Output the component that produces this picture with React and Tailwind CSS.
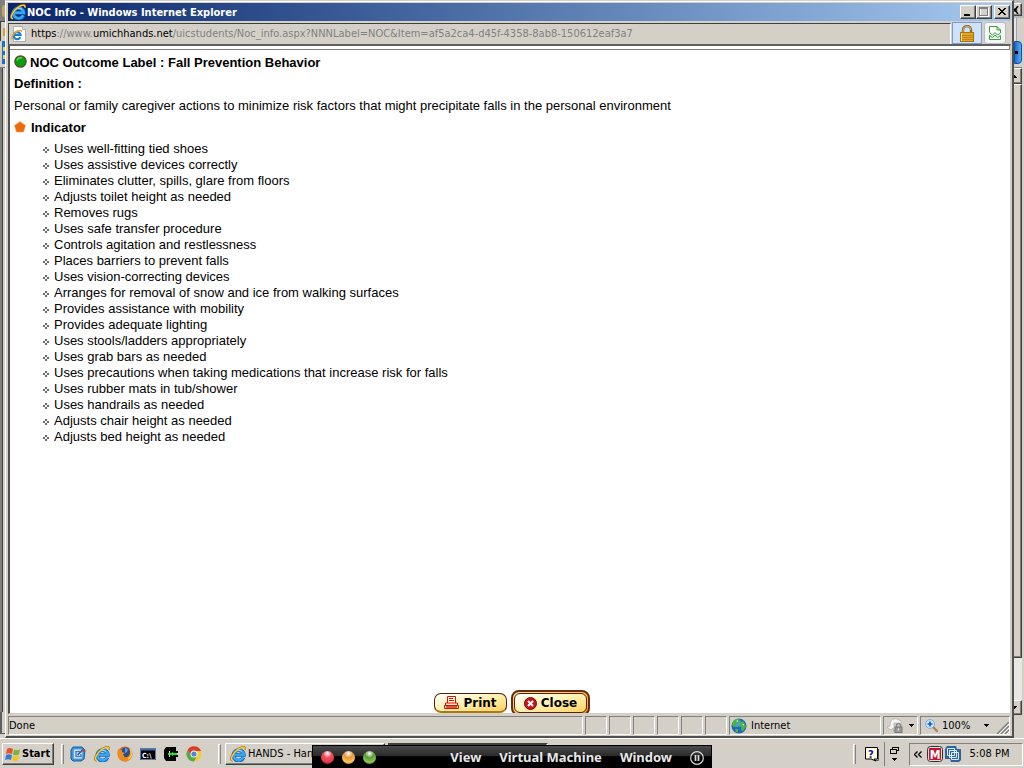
import React from 'react'

const indicators = [
  'Uses well-fitting tied shoes',
  'Uses assistive devices correctly',
  'Eliminates clutter, spills, glare from floors',
  'Adjusts toilet height as needed',
  'Removes rugs',
  'Uses safe transfer procedure',
  'Controls agitation and restlessness',
  'Places barriers to prevent falls',
  'Uses vision-correcting devices',
  'Arranges for removal of snow and ice from walking surfaces',
  'Provides assistance with mobility',
  'Provides adequate lighting',
  'Uses stools/ladders appropriately',
  'Uses grab bars as needed',
  'Uses precautions when taking medications that increase risk for falls',
  'Uses rubber mats in tub/shower',
  'Uses handrails as needed',
  'Adjusts chair height as needed',
  'Adjusts bed height as needed',
]

const raised =
  'border border-t-white border-l-white border-r-[#404040] border-b-[#404040] shadow-[inset_-1px_-1px_0_#808080]'
const sunken = 'border border-t-[#808080] border-l-[#808080] border-r-white border-b-white'

function IeIcon({ className }) {
  return (
    <svg viewBox="0 0 16 16" className={className} aria-hidden="true">
      <path d="M13.4 11.4A5.2 5.2 0 1 1 13.8 8.800H4.500" fill="none" stroke="#0f62bd" strokeWidth="3.800" />
      <path d="M13.2 11.2A5.1 5.1 0 1 1 13.600 8.700H4.500" fill="none" stroke="#36a8f0" strokeWidth="2.600" />
      <path d="M4.500 6.500A5 5 0 0 1 12 5.500" fill="none" stroke="#a6e0ff" strokeWidth="1" />
      <path
        d="M2.800 14.800C-1.200 14.500 2 7 8 3 12 .3 16.200 .2 15 3.800"
        fill="none"
        stroke="#b87a10"
        strokeWidth="2"
      />
      <path d="M3 14.600C-.6 14 2.400 7.200 8.200 3.200 12 .6 15.600 .6 14.800 3.500" fill="none" stroke="#ffcf40" strokeWidth="1.100" />
    </svg>
  )
}

function PageIcon() {
  return (
    <svg viewBox="0 0 16 16" className="w-4 h-4" aria-hidden="true">
      <path d="M2.500 .5h9l3 3v12h-12z" fill="#fff" stroke="#b0b0b0" />
      <path d="M11.500 .5v3h3" fill="#e4e4e4" stroke="#b0b0b0" />
      <path d="M9.300 11.200A3.500 3.500 0 1 1 9.600 9H3.500" fill="none" stroke="#1c7fda" strokeWidth="2.200" />
      <path d="M1.500 13.400C-.5 12 2.500 7 6.500 5c2.500-1 4.500-.8 3.800 1" fill="none" stroke="#e9a01a" strokeWidth="1.400" />
    </svg>
  )
}

function CaptionButton({ label, className, children }) {
  return (
    <button type="button" aria-label={label} className={`w-4 h-[14px] bg-[#d4d0c8] ${raised} ${className}`}>
      <svg viewBox="0 0 14 12" className="w-[14px] h-3" shapeRendering="crispEdges" aria-hidden="true">
        {children}
      </svg>
    </button>
  )
}

function TitleBar() {
  return (
    <div className="h-[18px] flex items-center pl-[2px] pr-px bg-linear-to-r from-[#0a246a] to-[#a6caf0]">
      <IeIcon className="w-4 h-4 shrink-0" />
      <h1 className="flex-1 pl-px pt-[2px] text-[11px] font-bold text-white whitespace-nowrap">
        NOC Info - Windows Internet Explorer
      </h1>
      <CaptionButton label="Minimize" className="">
        <path d="M3 8h6v2H3z" />
      </CaptionButton>
      <CaptionButton label="Maximize" className="">
        <path d="M3.500 2.500h8v8h-8z" fill="none" stroke="#fff" />
        <path d="M2.500 1.500h8v8h-8zM2 2.500h9" fill="none" stroke="#808080" />
      </CaptionButton>
      <CaptionButton label="Close window" className="ml-[2px]">
        <path d="M3 2h2v1h1v1h2V3h1V2h2v1h-1v1H9v1H8v1h1v1h1v1h1v1H9V8H8V7H6v1H5v1H3V8h1V7h1V6h1V5H5V4H4V3H3z" />
      </CaptionButton>
    </div>
  )
}

function AddressBar() {
  return (
    <div className="h-[23px] flex gap-px">
      <div className="flex-1 min-w-0 flex items-center mt-[2px] pl-[2px] border-t border-l border-t-[#404040] border-l-[#404040] border-r border-r-white">
        <PageIcon />
        <a href="#" className="pl-1 text-[11px] text-[#808080] whitespace-nowrap overflow-hidden">
          <span className="text-black">https</span>://www.<span className="text-black">umichhands.net</span>
          /uicstudents/Noc_info.aspx?NNNLabel=NOC&amp;Item=af5a2ca4-d45f-4358-8ab8-150612eaf3a7
        </a>
      </div>
      <button
        type="button"
        aria-label="Security report"
        className="w-[30px] mt-px mr-px flex items-center justify-center border border-[#7a9cc6] bg-[#cfe1fb]"
      >
        <svg viewBox="0 0 14 17" className="w-[14px] h-[17px]" aria-hidden="true">
          <path d="M3 8V5a4 4 0 0 1 8 0v3" fill="none" stroke="#8a6d28" strokeWidth="2.400" />
          <path d="M3.200 8V5a3.800 3.800 0 0 1 7.600 0" fill="none" stroke="#d9c48a" strokeWidth=".8" />
          <rect x=".5" y="7.500" width="13" height="9" fill="#e5a823" stroke="#a87413" />
          <path d="M1 10.500h12M1 12.500h12M1 14.500h12" stroke="#bd8218" />
          <path d="M1.500 8v8" stroke="#ffe08a" />
        </svg>
      </button>
      <button
        type="button"
        aria-label="Compatibility view"
        className="w-[22px] mt-px mr-[5px] flex items-center justify-center rounded-[3px] border border-[#b9bcc6] bg-[#f3f5f8]"
      >
        <svg viewBox="0 0 12 14" className="w-3 h-[14px]" fill="none" stroke="#35a035" aria-hidden="true">
          <path d="M.5 6.500v-6h7.500l3.500 3.500v3M8 .5V4h3.500" fill="#fff" />
          <path d="M.5 9.500v4h11v-4" />
          <path d="M.5 6.500l3 2.500L6 6.500 8.500 9l3-2M.5 9.500l3 2L6 9l2.500 2.500 3-2" />
        </svg>
      </button>
    </div>
  )
}

function PageContent() {
  return (
    <main className="flex-1 min-h-0 flex flex-col bg-white overflow-hidden border-l-2 border-t-2 border-l-[#505050] border-t-[#606060] border-b border-r border-b-[#d4d0c8] border-r-[#d4d0c8] font-['Liberation_Sans',Arial,sans-serif] text-[13px] text-black">
      <div className="h-1 shrink-0 border-b border-r border-[#808080]" />
      <div className="flex-1 pl-1">
        <h2 className="h-6 pt-[2px] flex items-center gap-[3px] font-bold">
          <svg viewBox="0 0 13 13" className="w-[13px] h-[13px] mb-1" aria-hidden="true">
            <circle cx="6.500" cy="6.500" r="5.700" fill="#0b9d0b" stroke="#5b4a32" strokeWidth="1.200" />
            <path d="M3 5.500a4 4 0 0 1 5-2.500" fill="none" stroke="#62d862" strokeWidth="1.400" />
          </svg>
          NOC Outcome Label : Fall Prevention Behavior
        </h2>
        <h3 className="h-5 leading-5 font-bold">Definition :</h3>
        <p className="h-6 leading-6">
          Personal or family caregiver actions to minimize risk factors that might precipitate falls in the personal
          environment
        </p>
        <h3 className="h-5 flex items-center gap-[5px] font-bold">
          <svg viewBox="0 0 12 12" className="w-3 h-3 mb-[2px]" aria-hidden="true">
            <path d="M6 .5l5.500 4L9.500 11h-7L.5 4.500z" fill="#ee6a0c" stroke="#f39a55" strokeWidth=".5" />
          </svg>
          Indicator
        </h3>
        <ul className="pl-7 pt-[3px]">
          {indicators.map((item) => (
            <li key={item} className="h-4 leading-4 flex items-center gap-1">
              <svg viewBox="0 0 8 8" className="w-2 h-2 mt-[2px]" fill="#6f6a5c" shapeRendering="crispEdges" aria-hidden="true">
                <path d="M3 1h2v2H3zM1 3h2v2H1zM5 3h2v2H5zM3 5h2v2H3z" />
              </svg>
              {item}
            </li>
          ))}
        </ul>
      </div>
      <div className="h-[23px] shrink-0 flex justify-center gap-1 pl-1 font-['DejaVu_Sans',Verdana,sans-serif] text-[12px] font-bold">
        <button
          type="button"
          className="mt-[3px] w-[73px] h-5 flex items-center justify-center gap-1 rounded-[7px] border border-[#5a1f0a] border-b-2 border-b-[#a87a10] bg-linear-to-br from-white via-[#fff0ae] to-[#ffd25c]"
        >
          <svg viewBox="0 0 15 13" className="w-[15px] h-[13px] shrink-0" fill="none" stroke="#cc1111" aria-hidden="true">
            <path d="M3.500 7V.5h8V7M5 2.500h4M5 4.500h5" />
            <path d="M1.500 9V7h12v2M.5 9.500h14v3H.5z" />
            <path d="M2 11h11" strokeWidth="1.400" />
          </svg>
          Print
        </button>
        <button
          type="button"
          className="w-[79px] h-[26px] shrink-0 p-px rounded-[8px] border-2 border-[#6b2a08] bg-linear-to-br from-[#ffe9a0] to-[#e09a10]"
        >
          <span className="h-5 flex items-center justify-center gap-1 rounded-[6px] border border-[#5a1f0a] bg-linear-to-br from-white via-[#fff0ae] to-[#ffd25c]">
            <svg viewBox="0 0 13 13" className="w-[13px] h-[13px] shrink-0" aria-hidden="true">
              <circle cx="6.500" cy="6.500" r="6" fill="#c4161c" stroke="#7d0a0e" />
              <path d="M4 4l5 5M9 4l-5 5" stroke="#fff" strokeWidth="2" />
            </svg>
            Close
          </span>
        </button>
      </div>
    </main>
  )
}

function Caret({ className = '' }) {
  return (
    <svg viewBox="0 0 5 3" className={`w-[5px] h-[3px] ${className}`} shapeRendering="crispEdges" aria-hidden="true">
      <path d="M0 0h5v1H4v1H3v1H2V2H1V1H0z" />
    </svg>
  )
}

function StatusBar() {
  return (
    <footer className="h-[22px] shrink-0 flex gap-[2px] pt-[2px] pb-px pr-px text-[11px]">
      <div className={`flex-1 flex items-center pt-px ${sunken}`}>Done</div>
      {[1, 2, 3, 4, 5, 6].map((n) => (
        <div key={n} className={`w-[22px] ${sunken}`} />
      ))}
      <div className={`w-[152px] flex items-center gap-1 pl-px ${sunken}`}>
        <svg viewBox="0 0 16 16" className="w-4 h-4" aria-hidden="true">
          <circle cx="8" cy="8" r="7.500" fill="#2368b8" />
          <circle cx="6" cy="5" r="4" fill="#75b9f2" opacity=".6" />
          <path d="M2 4c2-3 5-3.500 6-3l1 2-3 2-1 3-2 1-2-2zM9 5l3-2 2 3 1 3-3 4-2-1 0-3-2-1zM4 11l3 0 0 3-2 0z" fill="#46b649" />
          <path d="M5 3l2-1 0 2zM11 6l2 0 0 2z" fill="#c6f2a2" />
        </svg>
        <span className="pt-px">Internet</span>
      </div>
      <button type="button" aria-label="Privacy report" className={`w-[35px] flex items-center gap-[5px] pl-[3px] ${sunken}`}>
        <svg viewBox="0 0 17 16" className="w-[17px] h-4" aria-hidden="true">
          <path d="M0 9l4 3 2-2 1 4V5a6 6 0 0 1 7 4V3L10 1C5 0 3 3 3 8z" fill="#f4f4f4" stroke="#aaa" strokeWidth=".7" />
          <path d="M9.500 9V7.500a2 2 0 0 1 4 0V9" fill="none" stroke="#888" strokeWidth="1.400" />
          <rect x="8" y="9" width="7" height="5.500" fill="#999" stroke="#777" />
          <path d="M11.500 10.500v2" stroke="#eee" />
        </svg>
        <Caret />
      </button>
      <div className={`w-[90px] flex items-center ${sunken}`}>
        <button type="button" className="flex-1 flex items-center gap-1 pl-1">
          <svg viewBox="0 0 13 13" className="w-[13px] h-[13px]" aria-hidden="true">
            <path d="M8 8l4 4" stroke="#c07a4a" strokeWidth="2.400" strokeLinecap="round" />
            <circle cx="5" cy="5" r="4.400" fill="#cfe8fc" stroke="#7aa9d8" />
            <path d="M5 2.500v5M2.500 5h5" stroke="#155cc0" strokeWidth="1.700" />
          </svg>
          <span className="flex-1 pt-px text-left">100%</span>
          <Caret />
        </button>
        <svg viewBox="0 0 12 12" className="w-3 h-3 ml-2 self-end shrink-0" aria-hidden="true">
          <path d="M0 12L12 0M4 12l8-8M8 12l4-4" stroke="#808080" strokeWidth="1.500" />
          <path d="M2 12L12 2M6 12l6-6M10 12l2-2" stroke="#fff" />
        </svg>
      </div>
    </footer>
  )
}

function QuickLaunch() {
  return (
    <div className="flex items-center gap-[7px]">
      <button type="button" aria-label="Show desktop">
        <svg viewBox="0 0 16 16" className="w-4 h-4" aria-hidden="true">
          <path d="M3 1h9l3 3-1 9-3 2H3l-2-2V4z" fill="#3f93d8" stroke="#1c5a9c" />
          <path d="M4 3.500h8v9H4z" fill="#fff" stroke="#8fbde6" />
          <path d="M10 5.500H6v5h5V8" fill="none" stroke="#2f7cc4" strokeWidth="1.400" />
          <path d="M7.500 9L13 3.500" stroke="#2a6cb0" strokeWidth="1.800" />
          <path d="M12.500 4l2.500 1.500" stroke="#d93a2b" strokeWidth="2" />
        </svg>
      </button>
      <button type="button" aria-label="Internet Explorer" className="ml-px">
        <IeIcon className="w-4 h-4" />
      </button>
      <button type="button" aria-label="Firefox">
        <svg viewBox="0 0 16 16" className="w-4 h-4" aria-hidden="true">
          <circle cx="8" cy="8" r="7.500" fill="#e0661a" />
          <circle cx="8.500" cy="6.500" r="5" fill="#264f96" />
          <path d="M8 2l3 1-1 3-2 1z" fill="#5b9bd8" />
          <path d="M1 3l2 1 2 0 0 2 3 1-2 1.500 1.500 2.500c3 1 5-1 5.500-4l0-3c3 4 2 9-2 11C5 17-1 12 1 3z" fill="#ef8a1f" />
          <path d="M13 3c3 5 1 9-2 10" fill="none" stroke="#ffd24a" strokeWidth="1.400" />
        </svg>
      </button>
      <button type="button" aria-label="Command Prompt">
        <svg viewBox="0 0 16 16" className="w-4 h-4" aria-hidden="true">
          <path d="M0 2h16v12H0z" fill="#000" />
          <path d="M0 2h16v2.500H0z" fill="#3f6ea8" />
          <path d="M.5 2.500h15v11H.5z" fill="none" stroke="#5779a8" />
          <text x="2" y="11.500" fontSize="7" fontWeight="bold" fill="#fff">C:\</text>
        </svg>
      </button>
      <button type="button" aria-label="Connection">
        <svg viewBox="0 0 16 16" className="w-4 h-4" aria-hidden="true">
          <path d="M3 1h10v4H6v6h7v4H3l-2-3V4z" fill="#050505" />
          <path d="M7 5h8v2H7zM7 9h8v2H7z" fill="#050505" />
          <path d="M5 7h4V6l2 1h3v2h-3l-2 1V9H5z" fill="#2be02b" />
        </svg>
      </button>
      <button type="button" aria-label="Chrome">
        <svg viewBox="0 0 16 16" className="w-4 h-4" aria-hidden="true">
          <circle cx="8" cy="8" r="7.500" fill="#f5cf2e" />
          <path d="M1.500 4.200A7.500 7.500 0 0 1 15 5H8L5 9z" fill="#dc3a2c" />
          <path d="M1.500 4.200A7.500 7.500 0 0 0 8 15.500l3-5.500-6-1z" fill="#56a94a" />
          <circle cx="8" cy="8" r="3.500" fill="#fff" />
          <circle cx="8" cy="8" r="2.600" fill="#4a86dc" />
        </svg>
      </button>
    </div>
  )
}

function Divider() {
  return <div className="w-[3px] h-5 border-l border-t border-l-white border-t-white border-r border-r-[#808080]" />
}

function Tray() {
  return (
    <div className="ml-auto flex items-center h-full">
      <Divider />
      <button type="button" aria-label="Help" className="ml-[9px]">
        <svg viewBox="0 0 14 15" className="w-[14px] h-[15px]" aria-hidden="true">
          <path d="M.5 .5h12v11.500H9l2 2-5-2H.5z" fill="#ffffe1" stroke="#000" />
          <path d="M13.500 2v11.500H11" fill="none" stroke="#555" />
          <text x="3" y="10.500" fontSize="11" fontWeight="bold" fill="#10109a">?</text>
        </svg>
      </button>
      <div className="ml-[5px] h-6 border-l border-[#808080]" />
      <button type="button" aria-label="Language options" className="ml-[5px] h-[14px] flex flex-col items-center justify-between">
        <svg viewBox="0 0 9 7" className="w-[9px] h-[7px]" fill="none" stroke="#000" shapeRendering="crispEdges" aria-hidden="true">
          <path d="M2.500 2.500v-2h6v3h-2M.5 2.500h6v4h-6z" />
        </svg>
        <Caret />
      </button>
      <div className={`ml-[10px] w-[114px] h-[23px] flex items-center pl-1 ${sunken}`}>
        <button type="button" aria-label="Show hidden icons">
          <svg viewBox="0 0 8 7" className="w-2 h-[7px]" fill="none" stroke="#000" strokeWidth="1.300" aria-hidden="true">
            <path d="M3.500 .5l-3 3 3 3M7.500 .5l-3 3 3 3" />
          </svg>
        </button>
        <svg viewBox="0 0 16 16" className="w-4 h-4 ml-[5px]" aria-hidden="true">
          <rect x=".5" y=".5" width="15" height="15" rx="3" fill="#ddd" stroke="#333" />
          <rect x="2" y="2" width="12" height="12" rx="1" fill="#c4122f" />
          <text x="8" y="12.500" textAnchor="middle" fontSize="12" fontWeight="bold" fill="#fff">M</text>
        </svg>
        <svg viewBox="0 0 16 16" className="w-4 h-4 ml-[2px]" fill="none" aria-hidden="true">
          <path d="M2 0h9l1 3h4v11l-2 2H6l-1-3H0V3z" fill="#2f639c" />
          <path d="M2.500 2.500h7v7h-7zM6.500 6.500h7v7h-7zM4.500 4.500h7v7h-7z" stroke="#dcebf8" />
        </svg>
        <time className="flex-1 pr-1 text-[11px] text-center whitespace-nowrap">5:08 PM</time>
      </div>
    </div>
  )
}

function Taskbar() {
  return (
    <nav className="h-[30px] shrink-0 flex items-center pl-[2px] pr-[1px] pt-px border-t border-t-white bg-[#d4d0c8] text-[11px]">
      <button type="button" className={`w-[52px] h-[22px] flex items-center gap-px pl-[2px] font-bold ${raised}`}>
        <svg viewBox="0 0 16 16" className="w-4 h-4 shrink-0" aria-hidden="true">
          <path d="M2 3c2-1.500 4-1 6 0L7 8C5 7 3 7 1 8z" fill="#e4532a" />
          <path d="M9 3.500c2 1 4 1 6 0l-1 5c-2 1-4 1-6 0z" fill="#79b532" />
          <path d="M1 9c2-1 4-1 6 0l-1 5c-2-1-4-1-6 0z" fill="#3a78d2" />
          <path d="M8 9.500c2 1 4 1 6 0l-1 5c-2 1-4 1-6 0z" fill="#f4c324" />
        </svg>
        Start
      </button>
      <div className="ml-[7px] mr-[6px]">
        <Divider />
      </div>
      <QuickLaunch />
      <div className="ml-4 mr-1">
        <Divider />
      </div>
      <button type="button" className={`w-[160px] h-[22px] flex items-center gap-[2px] pl-1 overflow-hidden whitespace-nowrap ${raised}`}>
        <IeIcon className="w-4 h-4 shrink-0" />
        HANDS - Han
      </button>
      <button
        type="button"
        aria-label="NOC Info"
        className="ml-[3px] w-[160px] h-[22px] border-2 border-t-[#404040] border-l-[#404040] border-r-white border-b-white bg-[#e9e7e3]"
      />
      <Tray />
    </nav>
  )
}

function Light({ label, className }) {
  return <button type="button" aria-label={label} className={`w-[13px] h-[13px] rounded-full ${className}`} />
}

// floating control strip of the virtual machine, pinned over the taskbar
function MachineBar() {
  return (
    <div className="absolute bottom-0 left-[312px] w-[400px] h-[23px] flex items-center pt-px pl-2 pr-[7px] border-t border-x border-black bg-linear-to-b from-[#4a4a4a] from-0% via-[#2b2b2b] via-45% to-black to-50% font-['Noto_Sans',sans-serif] text-[13px] font-bold text-[#e8e8e8]">
      <div className="flex gap-2">
        <Light
          label="Close machine"
          className="bg-[radial-gradient(circle_at_50%_20%,#fff_0%,#f04a5c_35%,#e8404e_65%,#7a0c14_100%)]"
        />
        <Light
          label="Minimize machine"
          className="bg-[radial-gradient(circle_at_50%_20%,#fff_0%,#e8953a_35%,#f7c85c_70%,#8a4a08_100%)]"
        />
        <Light
          label="Zoom machine"
          className="bg-[radial-gradient(circle_at_50%_20%,#fff_0%,#5a9a34_35%,#8cc850_70%,#2a5a10_100%)]"
        />
      </div>
      <div className="ml-auto flex items-center gap-[18px]">
        <button type="button">View</button>
        <button type="button">Virtual Machine</button>
        <button type="button">Window</button>
        <button type="button" aria-label="Pause">
          <svg viewBox="0 0 14 14" className="w-[14px] h-[14px]" fill="none" stroke="#d8d8d8" aria-hidden="true">
            <circle cx="7" cy="7" r="6.300" strokeWidth="1.200" />
            <path d="M5.500 4v6M8.500 4v6" strokeWidth="1.800" />
          </svg>
        </button>
      </div>
    </div>
  )
}

// edges of the window that sits behind the popup
function BackLeft() {
  return (
    <div className="w-[5px] shrink-0 flex flex-col bg-[#d4d0c8]">
      <div className="h-[21px] bg-[#808080] flex items-center justify-end">
        <div className="w-[3px] h-3 rounded-l-full bg-[#c9a55c]" />
      </div>
      <div className="h-5 border-t border-l border-[#404040] flex items-center justify-end">
        <div className="w-[2px] h-2 bg-[#e39a2e]" />
      </div>
      <div className="h-[23px] ml-[2px] bg-[#1a6fd0] flex flex-col items-end justify-center gap-1">
        <div className="w-[2px] h-1 bg-[#f2d53c]" />
        <div className="w-[2px] h-1 bg-[#f2d53c]" />
      </div>
      <div className="h-1 border-b border-[#808080]" />
      <div className="flex-1 w-[3px] bg-[#808080] border-r border-[#404040]" />
      <div className="h-[22px] mb-1 border-b border-l-2 border-[#606060]" />
    </div>
  )
}

function BackRight() {
  return (
    <div className="w-[10px] shrink-0 flex flex-col pr-[2px] bg-[#d4d0c8]">
      <div className="h-[18px] -mr-[2px] pt-[3px] bg-[#b8b8b8]">
        <div className={`w-2 h-[13px] bg-[#d4d0c8] ${raised} border-l-0 flex items-center`}>
          <svg viewBox="0 0 5 8" className="w-[5px] h-2" aria-hidden="true">
            <path d="M4 0L1 4l3 4M0 3l2 1-2 1" fill="none" stroke="#000" strokeWidth="1.500" />
          </svg>
        </div>
      </div>
      <div className="h-[23px] mr-[5px] border-r border-[#9aa4b4] bg-[#e4e6ea]" />
      <div className="h-[23px] rounded-r-sm border border-[#0b4fa8] bg-linear-to-r from-[#1a6fd0] to-[#5aa8f4] flex items-center">
        <div className="w-[3px] h-[3px] bg-black" />
      </div>
      <div className="h-1 border-b border-[#808080]" />
      <div className={`h-4 ${raised} border-l-0 flex items-center overflow-hidden`}>
        <Caret className="-ml-[2px] rotate-180" />
      </div>
      <div className={`flex-1 ${raised} border-l-0`} />
      <div className="h-[42px] bg-[#e9e7e3]" />
      <div className={`h-[15px] mb-[23px] ${raised} border-l-0 flex items-center overflow-hidden`}>
        <Caret className="-ml-[2px]" />
      </div>
    </div>
  )
}

function App() {
  return (
    <div className="relative h-screen flex flex-col overflow-hidden bg-[#d4d0c8] font-['DejaVu_Sans_Condensed','DejaVu_Sans',Tahoma,sans-serif] text-black">
      <div className="flex-1 min-h-0 flex">
        <BackLeft />
        <section className="flex-1 min-w-0 flex flex-col pt-px pl-px pr-px border-t border-t-[#d4d0c8] border-l border-l-white border-r-2 border-r-[#505050] border-b-2 border-b-[#505050] shadow-[inset_0_1px_0_#fff]">
          <div className="flex-1 min-h-0 flex flex-col pt-px pl-px">
            <TitleBar />
            <AddressBar />
            <PageContent />
            <StatusBar />
          </div>
        </section>
        <BackRight />
      </div>
      <Taskbar />
      <MachineBar />
    </div>
  )
}

export default App
